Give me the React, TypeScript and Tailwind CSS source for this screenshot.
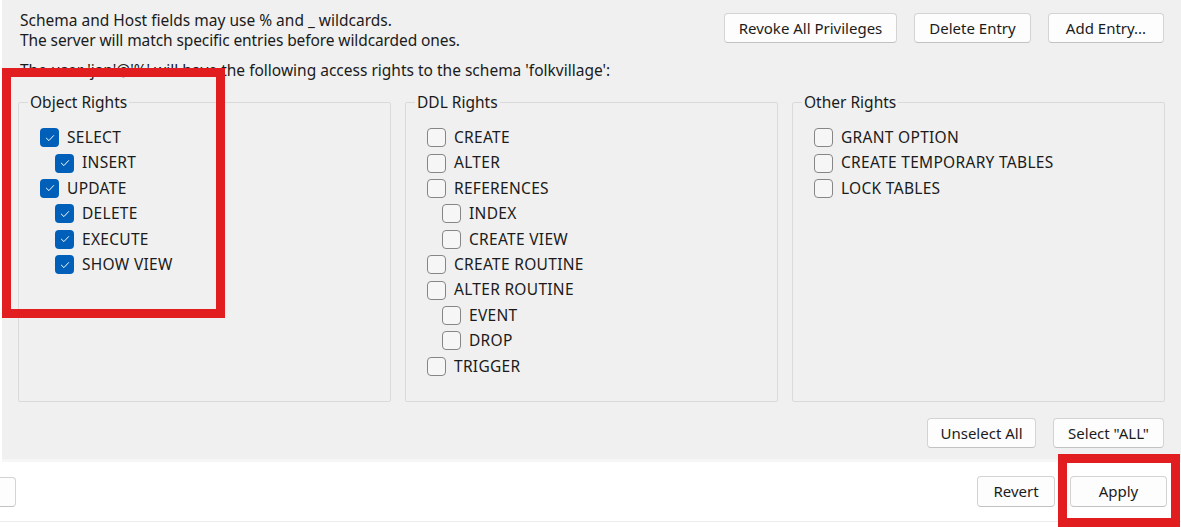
import React from 'react';

type Right = { label: string; checked?: boolean; sub?: boolean };

const objectRights: Right[] = [
  { label: 'SELECT', checked: true },
  { label: 'INSERT', checked: true, sub: true },
  { label: 'UPDATE', checked: true },
  { label: 'DELETE', checked: true, sub: true },
  { label: 'EXECUTE', checked: true, sub: true },
  { label: 'SHOW VIEW', checked: true, sub: true },
];

const ddlRights: Right[] = [
  { label: 'CREATE' },
  { label: 'ALTER' },
  { label: 'REFERENCES' },
  { label: 'INDEX', sub: true },
  { label: 'CREATE VIEW', sub: true },
  { label: 'CREATE ROUTINE' },
  { label: 'ALTER ROUTINE' },
  { label: 'EVENT', sub: true },
  { label: 'DROP', sub: true },
  { label: 'TRIGGER' },
];

const otherRights: Right[] = [
  { label: 'GRANT OPTION' },
  { label: 'CREATE TEMPORARY TABLES' },
  { label: 'LOCK TABLES' },
];

function CheckBox({ checked }: { checked?: boolean }) {
  if (checked) {
    return (
      <span className="flex h-[19px] w-[19px] shrink-0 items-center justify-center rounded-[4px] bg-[#005fb8]">
        <svg width="12" height="12" viewBox="0 0 12 12" fill="none">
          <path d="M2.4 6.2 L4.9 8.6 L9.6 3.6" stroke="#ffffff" strokeWidth="1" strokeLinecap="round" strokeLinejoin="round" />
        </svg>
      </span>
    );
  }
  return <span className="block h-[19px] w-[19px] shrink-0 rounded-[4px] border border-[#868686] bg-[#f6f6f6]" />;
}

function GroupBox({ title, items }: { title: string; items: Right[] }) {
  return (
    <fieldset className="h-[310px] rounded-[2px] border border-[#dadada] pl-[21px] pt-[13px]">
      <legend className="-ml-[12px] px-[2px] leading-[20px] text-[#1b1b1b]">{title}</legend>
      {items.map((it) => (
        <div key={it.label} className={`flex h-[25.4px] items-center gap-[8px] ${it.sub ? 'pl-[15px]' : ''}`}>
          <CheckBox checked={it.checked} />
          <span className="whitespace-nowrap tracking-[0.3px] text-[#1b1b1b]">{it.label}</span>
        </div>
      ))}
    </fieldset>
  );
}

function WinButton({ children, className = '' }: { children: React.ReactNode; className?: string }) {
  return (
    <button
      className={`flex h-[30px] items-center justify-center rounded-[4px] border border-[#d3d3d3] border-b-[#c2c2c2] bg-[#fdfdfd] text-[15px] text-[#1b1b1b] ${className}`}
    >
      {children}
    </button>
  );
}

export default function App() {
  return (
    <div
      className="relative h-[527px] w-[1181px] overflow-hidden bg-white text-[15.5px]"
      style={{ fontFamily: '"Noto Sans", "Open Sans", sans-serif' }}
    >
      {/* privileges panel */}
      <div className="ml-[2px] flex h-[462px] flex-col border-b-[3px] border-[#f6f6f6] bg-[#f0f0f0] px-4">
        <div className="flex justify-between pt-[10px]">
          <div className="pl-[2px] leading-[20px] text-[#1b1b1b]">
            <div>Schema and Host fields may use % and _ wildcards.</div>
            <div className="tracking-[-0.1px]">The server will match specific entries before wildcarded ones.</div>
          </div>
          <div className="flex gap-[17px] pr-[1px] pt-[3px]">
            <WinButton className="w-[173px]">Revoke All Privileges</WinButton>
            <WinButton className="w-[117px]">Delete Entry</WinButton>
            <WinButton className="w-[116px]">Add Entry...</WinButton>
          </div>
        </div>
        <div className="mt-[10px] pl-[2px] leading-[20px] text-[#1b1b1b]">
          The user 'jan'@'%' will have the following access rights to the schema 'folkvillage':
        </div>
        <div className="mt-[12px] grid grid-cols-3 gap-[14px]">
          <GroupBox title="Object Rights" items={objectRights} />
          <GroupBox title="DDL Rights" items={ddlRights} />
          <GroupBox title="Other Rights" items={otherRights} />
        </div>
        <div className="mt-[16px] flex justify-end gap-[17px] pr-[1px]">
          <WinButton className="w-[109px]">Unselect All</WinButton>
          <WinButton className="w-[111px]">Select "ALL"</WinButton>
        </div>
      </div>

      {/* footer */}
      <div className="flex h-[60px] items-center justify-between border-b border-[#ececec] pr-[14px]">
        <WinButton className="-ml-[60px] w-[76px]"> </WinButton>
        <div className="flex gap-[15px]">
          <WinButton className="h-[31px] w-[78px]">Revert</WinButton>
          <WinButton className="h-[31px] w-[97px]">Apply</WinButton>
        </div>
      </div>

      {/* annotation boxes */}
      <div className="absolute left-[2px] top-[68px] h-[250px] w-[223px] border-[9px] border-[#e21d1f]" />
      <div className="absolute left-[1058px] top-[454px] h-[73px] w-[122px] border-[9px] border-[#e21d1f]" />
    </div>
  );
}
